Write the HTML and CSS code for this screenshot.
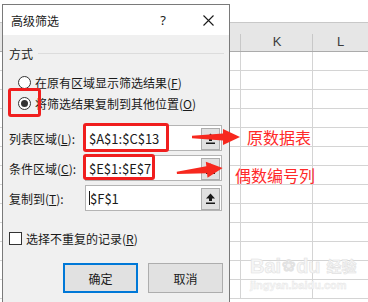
FILE: index.html
```html
<!DOCTYPE html>
<html>
<head>
<meta charset="utf-8">
<link rel="stylesheet" href="styles.css">
</head>
<body>
<div class="sheet">
  <div class="topbar"></div>
  <div class="colhead">
    <div class="hc hc-j"></div>
    <div class="hc hc-k">K</div>
    <div class="hc hc-l">L</div>
  </div>
  <div class="rows">
    <div class="row"><div class="c c1"></div><div class="c c2"></div><div class="c c3"></div></div>
    <div class="row"><div class="c c1"></div><div class="c c2"></div><div class="c c3"></div></div>
    <div class="row"><div class="c c1"></div><div class="c c2"></div><div class="c c3"></div></div>
    <div class="row"><div class="c c1"></div><div class="c c2"></div><div class="c c3"></div></div>
    <div class="row"><div class="c c1"></div><div class="c c2"></div><div class="c c3"></div></div>
    <div class="row"><div class="c c1"></div><div class="c c2"></div><div class="c c3"></div></div>
    <div class="row"><div class="c c1"></div><div class="c c2"></div><div class="c c3"></div></div>
    <div class="row"><div class="c c1"></div><div class="c c2"></div><div class="c c3"></div></div>
    <div class="row"><div class="c c1"></div><div class="c c2"></div><div class="c c3"></div></div>
    <div class="row"><div class="c c1"></div><div class="c c2"></div><div class="c c3"></div></div>
    <div class="row"><div class="c c1"></div><div class="c c2"></div><div class="c c3"></div></div>
    <div class="row"><div class="c c1"></div><div class="c c2"></div><div class="c c3"></div></div>
    <div class="row"><div class="c c1"></div><div class="c c2"></div><div class="c c3"></div></div>
  </div>
</div>

<div class="dialog">
  <div class="titlebar">
    <span class="title">高级筛选</span>
    <span class="help">?</span>
    <span class="close">
      <svg width="11" height="11" viewBox="0 0 11 11"><path d="M0.5 0.5 L10.5 10.5 M10.5 0.5 L0.5 10.5" stroke="#1a1a1a" stroke-width="1.1" fill="none"/></svg>
    </span>
  </div>
  <div class="body">
    <div class="group"><span class="group-label">方式</span><span class="rule"></span></div>
    <div class="opt"><span class="radio"></span><span>在原有区域显示筛选结果(<u>F</u>)</span></div>
    <div class="opt"><span class="radio checked"></span><span>将筛选结果复制到其他位置(<u>O</u>)</span></div>
    <div class="refs">
      <div class="ref">
        <span class="lbl">列表区域(<u>L</u>):</span>
        <div class="field">
          <span class="val">$A$1:$C$13</span>
          <span class="pick"><svg width="11" height="12" viewBox="0 0 11 12"><path d="M5.5 0.5 L10 5.5 L7 5.5 L7 8 L4 8 L4 5.5 L1 5.5 Z" fill="#1a1a1a"/><rect x="1" y="9.5" width="9" height="1.5" fill="#1a1a1a"/></svg></span>
        </div>
      </div>
      <div class="ref">
        <span class="lbl">条件区域(<u>C</u>):</span>
        <div class="field">
          <span class="val">$E$1:$E$7</span>
          <span class="pick"><svg width="11" height="12" viewBox="0 0 11 12"><path d="M5.5 0.5 L10 5.5 L7 5.5 L7 8 L4 8 L4 5.5 L1 5.5 Z" fill="#1a1a1a"/><rect x="1" y="9.5" width="9" height="1.5" fill="#1a1a1a"/></svg></span>
        </div>
      </div>
      <div class="ref">
        <span class="lbl">复制到(<u>T</u>):</span>
        <div class="field">
          <span class="val"><span class="caret"></span>$F$1</span>
          <span class="pick"><svg width="11" height="12" viewBox="0 0 11 12"><path d="M5.5 0.5 L10 5.5 L7 5.5 L7 8 L4 8 L4 5.5 L1 5.5 Z" fill="#1a1a1a"/><rect x="1" y="9.5" width="9" height="1.5" fill="#1a1a1a"/></svg></span>
        </div>
      </div>
    </div>
    <div class="check"><span class="box"></span><span>选择不重复的记录(<u>R</u>)</span></div>
    <div class="actions">
      <button class="btn primary">确定</button>
      <button class="btn">取消</button>
    </div>
  </div>
</div>

<div class="mark mark-radio"></div>
<div class="mark mark-list"></div>
<div class="mark mark-crit"></div>

<svg class="arrows" width="368" height="302" viewBox="0 0 368 302">
  <path d="M192 135.8 L223 133.5 L223 129 L240 137 L223 145 L223 140.5 L192 138.2 Z" fill="#f7281e"/>
  <path d="M177 170.8 L207 168.5 L207 164 L223 172 L207 180 L207 175.5 L177 173.2 Z" fill="#f7281e" transform="rotate(-6 223 172) translate(0 -4)"/>
</svg>

<div class="note note1">原数据表</div>
<div class="note note2">偶数编号列</div>

<div class="watermark">
  <div class="wm-top">Bai<span class="paw">❀</span>du<span class="wm-cn">经验</span></div>
  <div class="wm-url">jingyan.baidu.com</div>
</div>
</body>
</html>
```

FILE: styles.css
```css
* { box-sizing: border-box; }
html, body { margin: 0; padding: 0; }
body {
  width: 368px;
  height: 302px;
  overflow: hidden;
  background: #ffffff;
  position: relative;
  font-family: "Noto Sans CJK SC", "Noto Sans", sans-serif;
  font-size: 12px;
  color: #1a1a1a;
}

/* spreadsheet background */
.sheet { width: 368px; }
.topbar { height: 23px; border-bottom: 1px solid #c8c8c8; background: #fff; }
.colhead {
  display: grid;
  grid-template-columns: 241px 72px 1fr;
  height: 29px;
  background: #e6e6e6;
  border-bottom: 1px solid #ababab;
}
.hc {
  font-family: "Liberation Sans", "Noto Sans", sans-serif;
  font-size: 13px;
  line-height: 15px;
  color: #3c3c3c;
  display: flex;
  align-items: flex-end;
  justify-content: center;
  padding-bottom: 2px;
  position: relative;
}
.hc-j::after, .hc-k::after {
  content: "";
  position: absolute;
  right: 0;
  top: 11px;
  bottom: 0;
  width: 1px;
  background: #c8c8c8;
}
.row {
  display: grid;
  grid-template-columns: 241px 72px 1fr;
  height: 19px;
  border-bottom: 1px solid #d4d4d4;
}
.c1, .c2 { border-right: 1px solid #d4d4d4; }

/* dialog */
.dialog {
  position: absolute;
  left: 2px;
  top: 4px;
  width: 228px;
  height: 310px;
  border: 1px solid #7a7a7a;
  background: #f0f0f0;
}
.titlebar {
  height: 30px;
  background: #ffffff;
  display: flex;
  align-items: center;
  padding-left: 8px;
}
.title { font-size: 12px; flex: 1; }
.help { font-family: "Noto Sans", sans-serif; font-size: 13px; width: 20px; margin-right: 30px; text-align: center; }
.close { width: 11px; height: 11px; margin-right: 15px; display: flex; }

.body { padding: 0 6px; }
.group {
  display: flex;
  align-items: center;
  height: 16px;
  margin-top: 10px;
}
.group-label { font-size: 12px; }
.rule { flex: 1; height: 1px; background: #dcdcdc; margin-left: 5px; margin-right: -1px; }

.opt {
  display: flex;
  align-items: center;
  height: 21px;
  padding-left: 9px;
}
.group + .opt { margin-top: 11px; }
.radio {
  width: 13px;
  height: 13px;
  border: 1px solid #333333;
  border-radius: 50%;
  background: #fff;
  margin-right: 4px;
  position: relative;
  flex: none;
}
.radio.checked::after {
  content: "";
  position: absolute;
  left: 2px;
  top: 2px;
  width: 7px;
  height: 7px;
  border-radius: 50%;
  background: #333333;
}

.refs {
  display: flex;
  flex-direction: column;
  gap: 4px;
  margin-top: 11px;
}
.ref { display: flex; align-items: center; height: 26px; }
.lbl { width: 76px; flex: none; }
.field {
  width: 137px;
  height: 26px;
  background: #ffffff;
  border: 1px solid #b4b4b4;
  display: flex;
  align-items: center;
  justify-content: space-between;
}
.val {
  font-family: "Noto Sans CJK SC", "Noto Sans", sans-serif;
  font-size: 13px;
  padding-left: 3px;
  display: flex;
  align-items: center;
  color: #1a1a1a;
}
.caret { width: 1px; height: 14px; background: #1a1a1a; }
.pick {
  width: 19px;
  height: 22px;
  margin-right: 1px;
  margin-top: 2px;
  background: #e1e1e1;
  border: 1px solid #adadad;
  display: flex;
  align-items: center;
  justify-content: center;
}

.check {
  display: flex;
  align-items: center;
  height: 18px;
  margin-top: 18px;
}
.box {
  width: 13px;
  height: 13px;
  border: 1px solid #333333;
  background: #fff;
  margin-right: 4px;
  flex: none;
}

.actions {
  display: flex;
  justify-content: flex-end;
  gap: 10px;
  margin-top: 16px;
}
.btn {
  width: 75px;
  height: 30px;
  background: #e1e1e1;
  border: 1px solid #adadad;
  font-family: "Noto Sans CJK SC", "Noto Sans", sans-serif;
  font-size: 12px;
  color: #1a1a1a;
  padding: 0;
  margin: 0;
}
.btn.primary { border: 2px solid #0078d7; }

/* annotations */
.mark {
  position: absolute;
  border: 3px solid #f01e1e;
  border-radius: 3px;
}
.mark-radio { left: 8px; top: 88px; width: 33px; height: 29px; }
.mark-list { left: 83px; top: 123px; width: 86px; height: 29px; }
.mark-crit { left: 83px; top: 154px; width: 72px; height: 26px; }
.arrows { position: absolute; left: 0; top: 0; pointer-events: none; }
.note {
  position: absolute;
  font-size: 16px;
  line-height: 20px;
  color: #ff2a2a;
}
.note1 { left: 247px; top: 127px; }
.note2 { left: 235px; top: 165px; }

.watermark {
  position: absolute;
  left: 250px;
  top: 254px;
  color: #f6f6f6;
  -webkit-text-stroke: 0.6px #e2e2e2;
  font-family: "Liberation Sans", sans-serif;
}
.wm-top { font-size: 20px; font-weight: bold; line-height: 24px; display: flex; align-items: center; }
.paw { font-size: 16px; margin: 0 1px; }
.wm-cn { font-family: "Noto Sans CJK SC", sans-serif; font-size: 15px; margin-left: 6px; }
.wm-url { font-size: 11px; font-weight: bold; line-height: 14px; -webkit-text-stroke: 0.4px #e6e6e6; }
```
